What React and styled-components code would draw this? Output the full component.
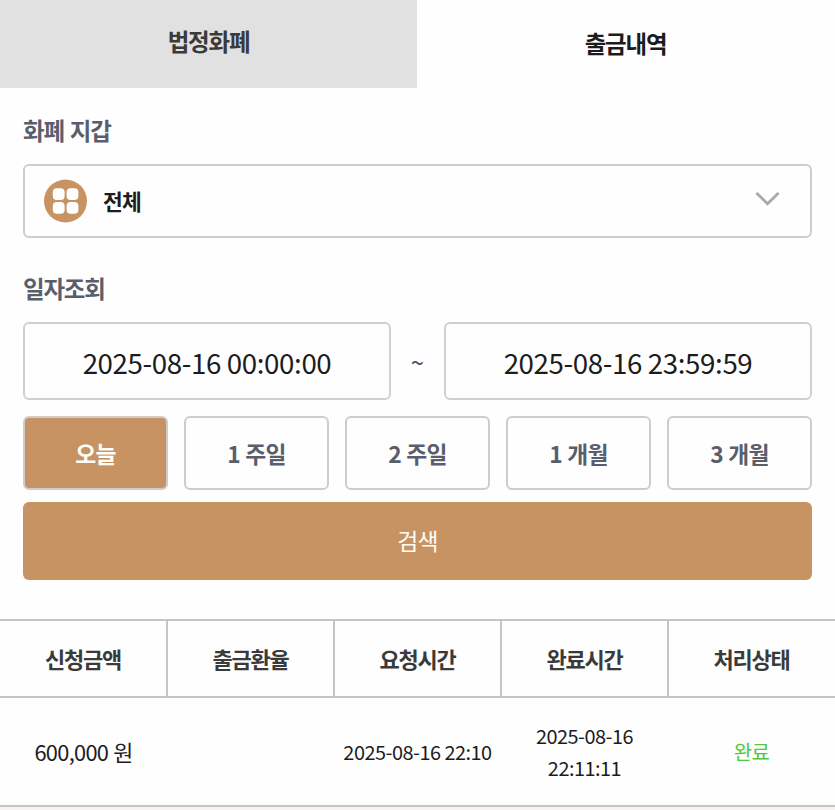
import { useState } from "react";
import { createGlobalStyle, styled } from "styled-components";

const periods = ["오늘", "1 주일", "2 주일", "1 개월", "3 개월"];
const columns = ["신청금액", "출금환율", "요청시간", "완료시간", "처리상태"];

const App = () => {
    const [tab, setTab] = useState("출금내역");
    const [period, setPeriod] = useState("오늘");

    return (
        <>
            <GlobalStyle />
            <Tabs>
                <Tab $active={tab === "법정화폐"} onClick={() => setTab("법정화폐")}>
                    법정화폐
                </Tab>
                <Tab $active={tab === "출금내역"} onClick={() => setTab("출금내역")}>
                    출금내역
                </Tab>
            </Tabs>

            <Filters>
                <Label>화폐 지갑</Label>
                <WalletSelect>
                    <WalletIcon />
                    <WalletName>전체</WalletName>
                    <Chevron />
                </WalletSelect>

                <Label $date>일자조회</Label>
                <DateRange>
                    <DateBox>2025-08-16 00:00:00</DateBox>
                    <Tilde>~</Tilde>
                    <DateBox>2025-08-16 23:59:59</DateBox>
                </DateRange>

                <Periods>
                    {periods.map((name) => (
                        <PeriodButton key={name} $active={name === period} onClick={() => setPeriod(name)}>
                            {name}
                        </PeriodButton>
                    ))}
                </Periods>
                <SearchButton>검색</SearchButton>
            </Filters>

            <Table>
                <HeadRow>
                    {columns.map((name) => (
                        <HeadCell key={name}>{name}</HeadCell>
                    ))}
                </HeadRow>
                <Row>
                    <Amount>600,000 원</Amount>
                    <Cell />
                    <Cell>2025-08-16 22:10</Cell>
                    <Cell>
                        2025-08-16
                        <br />
                        22:11:11
                    </Cell>
                    <Status>완료</Status>
                </Row>
            </Table>
        </>
    );
};

const WalletIcon = () => (
    <svg width="44" height="44" viewBox="0 0 44 44">
        <circle cx="22.5" cy="22" r="21.5" fill="#c79362" />
        <g fill="#ffffff">
            <rect x="9.8" y="9.2" width="11.8" height="11.8" rx="4" />
            <rect x="23.6" y="9.2" width="11.8" height="11.8" rx="4" />
            <rect x="9.8" y="23" width="11.8" height="11.8" rx="4" />
            <rect x="23.6" y="23" width="11.8" height="11.8" rx="4" />
        </g>
    </svg>
);

const Chevron = () => (
    <svg width="26" height="16" viewBox="0 0 26 16" fill="none">
        <path d="M2.3 2.7L12.5 12.7L22.7 2.7" stroke="#a9a9a9" strokeWidth="2.8" strokeLinecap="round" />
    </svg>
);

const GlobalStyle = createGlobalStyle`
    * {
        box-sizing: border-box;
    }

    body {
        margin: 0;
        background-color: #f8f3f0;
        font-family: "Noto Sans CJK KR", sans-serif;
        color: #1c1c1c;
    }

    #root {
        background-color: #fefefe;
    }

    button {
        margin: 0;
        padding: 0;
        font-family: inherit;
        cursor: pointer;
    }
`;

const Tabs = styled.nav`
    display: flex;
    width: 834px;
    height: 88px;
`;

const Tab = styled.button`
    flex: 1;
    border: none;
    padding-bottom: ${({ $active }) => ($active ? "3px" : "6px")};
    background-color: ${({ $active }) => ($active ? "#fefefe" : "#e1e1e1")};
    color: ${({ $active }) => ($active ? "#1c1c1c" : "#3a3a3a")};
    font-size: 23.5px;
    font-weight: 700;
    letter-spacing: -1.2px;
`;

const Filters = styled.section`
    padding: 25px 23px 39px;
`;

const Label = styled.h2`
    margin: ${({ $date }) => ($date ? "33px 0 17px" : "0 0 17px")};
    color: #5a5e6c;
    font-size: 23.5px;
    line-height: 34px;
    font-weight: 700;
    letter-spacing: -1.2px;
    word-spacing: 1.8px;
`;

const WalletSelect = styled.div`
    display: flex;
    align-items: center;
    height: 74px;
    padding: 0 29px 0 18px;
    border: 2px solid #cdcdcd;
    border-radius: 6px;

    svg:last-child {
        margin: -4px 0 0 auto;
    }
`;

const WalletName = styled.span`
    margin-left: 16px;
    padding-bottom: 2px;
    font-size: 21.5px;
    font-weight: 700;
    letter-spacing: -0.7px;
`;

const DateRange = styled.div`
    display: flex;
`;

const DateBox = styled.div`
    display: flex;
    flex: 1;
    align-items: center;
    justify-content: center;
    height: 78px;
    padding-top: 1px;
    border: 2px solid #d0d0d0;
    border-radius: 6px;
    font-size: 27.7px;
    letter-spacing: -0.38px;
`;

const Tilde = styled.span`
    width: 53px;
    padding-top: 1px;
    color: #4a4d57;
    font-size: 24px;
    line-height: 77px;
    text-align: center;
`;

const Periods = styled.div`
    display: grid;
    grid-template-columns: repeat(5, 1fr);
    gap: 16px;
    margin: 16px 0 12px;
`;

const PeriodButton = styled.button`
    height: 74px;
    border: 2px solid #cfcdcc;
    border-radius: 6px;
    background-color: ${({ $active }) => ($active ? "#c79362" : "#fefefe")};
    color: ${({ $active }) => ($active ? "#fffdf5" : "#5a5e6c")};
    font-size: 22.8px;
    font-weight: 700;
    letter-spacing: -0.8px;
    word-spacing: 1px;
`;

const SearchButton = styled.button`
    display: block;
    width: 100%;
    height: 78px;
    padding-bottom: 1px;
    border: none;
    border-radius: 6px;
    background-color: #c79362;
    color: #fffdf5;
    font-size: 22.8px;
    letter-spacing: -0.8px;
`;

const Table = styled.section`
    border-top: 2px solid #c6c3c2;
    border-bottom: 2px solid #c9c2be;
    text-align: center;
`;

const HeadRow = styled.div`
    display: grid;
    grid-template-columns: repeat(5, 1fr);
    height: 77px;
    border-bottom: 2px solid #c8c4c2;
`;

const HeadCell = styled.div`
    padding: 1px 1px 0 0;
    color: #3a3a3a;
    font-size: 22px;
    line-height: 72px;
    font-weight: 700;
    letter-spacing: -1.2px;

    & + & {
        margin-left: -1px;
        border-left: 2px solid #c8c4c2;
    }
`;

const Row = styled.div`
    display: grid;
    grid-template-columns: repeat(5, 1fr);
    align-items: center;
    height: 107px;
`;

const Cell = styled.div`
    font-size: 19.9px;
    line-height: 32px;
    letter-spacing: -0.5px;
    white-space: nowrap;
`;

const Amount = styled(Cell)`
    font-size: 21.8px;
    letter-spacing: -0.7px;
    word-spacing: 0.8px;
`;

const Status = styled(Cell)`
    color: #4fc83f;
`;

export default App;
